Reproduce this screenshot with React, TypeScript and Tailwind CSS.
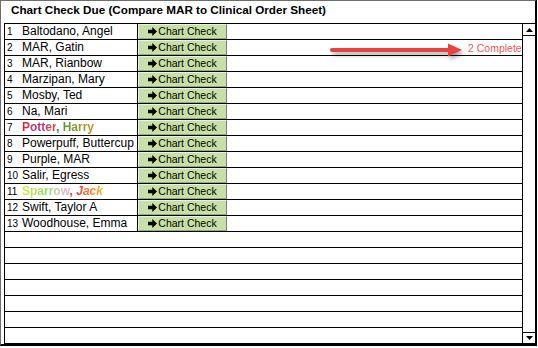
import React from "react";

const names: { n: number; node: React.ReactNode }[] = [
  { n: 1, node: "Baltodano, Angel" },
  { n: 2, node: "MAR, Gatin" },
  { n: 3, node: "MAR, Rianbow" },
  { n: 4, node: "Marzipan, Mary" },
  { n: 5, node: "Mosby, Ted" },
  { n: 6, node: "Na, Mari" },
  {
    n: 7,
    node: (
      <span className="font-bold">
        <span className="bg-gradient-to-r from-[#e4231e] via-[#b02e8e] to-[#d8501e] bg-clip-text text-transparent">Potter</span>
        <span className="text-[#3a6fb0]">, </span>
        <span className="bg-gradient-to-r from-[#5f9a2c] via-[#8c9a30] to-[#e0801e] bg-clip-text text-transparent">Harry</span>
      </span>
    ),
  },
  { n: 8, node: "Powerpuff, Buttercup" },
  { n: 9, node: "Purple, MAR" },
  { n: 10, node: "Salir, Egress" },
  {
    n: 11,
    node: (
      <span className="font-bold">
        <span className="bg-gradient-to-r from-[#d8e838] via-[#8fe060] to-[#f0a8e0] bg-clip-text text-transparent">Sparrow</span>
        <span className="text-[#e84040]">, </span>
        <span className="italic bg-gradient-to-r from-[#f02828] to-[#ffb020] bg-clip-text text-transparent">Jack</span>
      </span>
    ),
  },
  { n: 12, node: "Swift, Taylor A" },
  { n: 13, node: "Woodhouse, Emma" },
];

function Arrow() {
  return (
    <svg width="9" height="9" viewBox="0 0 9 9" className="shrink-0">
      <path d="M0 2.8 H4.3 V0 L9 4.5 L4.3 9 V6.2 H0 Z" fill="#000" />
    </svg>
  );
}

export default function App() {
  const empties = Array.from({ length: 7 });
  return (
    <div className="w-[538px] h-[348px] bg-white font-['Liberation_Sans',Arial,sans-serif] text-black">
      <div className="relative w-[537px] h-[346px] border-l border-t border-[#6e6e6e] border-r-2 border-b-2 border-r-black border-b-black flex flex-col">
        <div className="h-[22px] pl-[10px] pt-[2px] text-[11.7px] font-bold leading-[14px] whitespace-nowrap">
          Chart Check Due (Compare MAR to Clinical Order Sheet)
        </div>
        <div className="ml-[3px] flex-1 flex border-t border-b border-l border-black">
          <div className="flex-1 flex flex-col divide-y divide-black">
            {names.map((r) => (
              <div key={r.n} className="h-[15px] flex shrink-0 first:h-[15px] box-content">
                <div className="w-[133px] border-r border-black flex items-center">
                  <span className="w-[17px] pl-[2px] text-[10px] leading-[15px]">{r.n}</span>
                  <span className="text-[12px] leading-[15px] whitespace-nowrap">{r.node}</span>
                </div>
                <div className="w-[89px] bg-[#c6e0a6] border-t border-l border-t-[#e6f2da] border-l-[#e6f2da] border-r border-b border-r-[#7c7c7c] border-b-[#9aa88a] flex items-center justify-center gap-[1px]">
                  <Arrow />
                  <span className="text-[10.5px] leading-[13px] whitespace-nowrap">Chart Check</span>
                </div>
                <div className="flex-1" />
              </div>
            ))}
            {empties.map((_, i) => (
              <div key={i} className="h-[15px] shrink-0 box-content" />
            ))}
          </div>
          <div className="w-[13px] border-l border-black flex flex-col justify-between">
            <div className="h-[12px] border-b border-black flex items-center justify-center">
              <svg width="7" height="4" viewBox="0 0 7 4">
                <path d="M0 4 L3.5 0 L7 4 Z" fill="#000" />
              </svg>
            </div>
            <div className="h-[11px] border-t border-black flex items-center justify-center">
              <svg width="7" height="4" viewBox="0 0 7 4">
                <path d="M0 0 L7 0 L3.5 4 Z" fill="#000" />
              </svg>
            </div>
          </div>
        </div>
        <svg
          className="absolute left-[326px] top-[38px]"
          width="140"
          height="24"
          viewBox="0 0 140 24"
          style={{ filter: "drop-shadow(2px 3px 2px rgba(0,0,0,0.35))" }}
        >
          <line x1="5" y1="11" x2="123" y2="11" stroke="#e84343" strokeWidth="4" strokeLinecap="round" />
          <path d="M121 4.5 L135 11 L121 17.5 Z" fill="#e84343" />
        </svg>
        <div className="absolute left-[467px] top-[40px] text-[10.5px] leading-[14px] text-[#f25a5a] whitespace-nowrap">
          2 Complete
        </div>
      </div>
    </div>
  );
}
